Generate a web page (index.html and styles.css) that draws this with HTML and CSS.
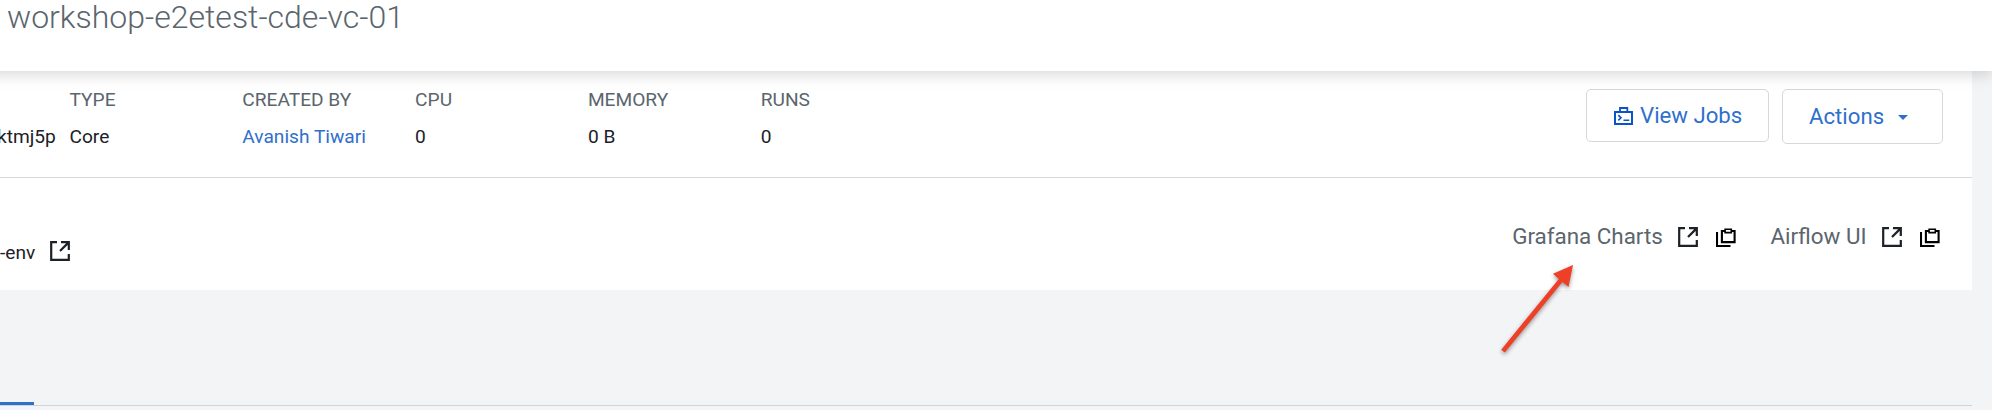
FILE: index.html
```
<!DOCTYPE html>
<html lang="en">
<head>
<meta charset="utf-8">
<title>Virtual cluster</title>
<link rel="stylesheet" href="styles.css">
</head>
<body>
<svg class="defs" width="0" height="0" aria-hidden="true">
  <symbol id="external" viewBox="0 0 20 20">
    <path d="M7 1.2H1.2V18.8H18.8V13M11 1.2H18.8V9M18.4 1.6L10 10" fill="none" stroke="currentColor" stroke-width="2.2"/>
  </symbol>
  <symbol id="clipboard" viewBox="0 0 20 20">
    <path d="M1 4V18H14.5M5.9 3H18.6V14.1H5.9Z" fill="none" stroke="currentColor" stroke-width="2.1"/>
    <path d="M9.1 1.3H15.3V4.6H9.1Z" fill="#fff" stroke="currentColor" stroke-width="1.6"/>
  </symbol>
</svg>
<header class="header"><h1 class="title">workshop-e2etest-cde-vc-01</h1></header>
<main class="card">
  <section class="summary">
    <dl class="facts">
      <div class="fact fact-id"><dt>&nbsp;</dt><dd>ktmj5p</dd></div>
      <div class="fact"><dt>TYPE</dt><dd>Core</dd></div>
      <div class="fact"><dt>CREATED BY</dt><dd><a class="link">Avanish Tiwari</a></dd></div>
      <div class="fact"><dt>CPU</dt><dd>0</dd></div>
      <div class="fact"><dt>MEMORY</dt><dd>0 B</dd></div>
      <div class="fact"><dt>RUNS</dt><dd>0</dd></div>
    </dl>
    <div class="buttons">
      <button class="btn btn-jobs">
        <svg class="jobs-icon" width="19" height="18" viewBox="0 0 19 18" fill="none" stroke="currentColor">
          <path d="M1 5H18V17H1Z" stroke-width="2"/>
          <path d="M6 5V1H13.3V5" stroke-width="1.8"/>
          <path d="M4.3 8.2L7 10.8L4.3 13.4M9.5 13.2H15.3" stroke-width="1.6"/>
        </svg>
        <span>View Jobs</span>
      </button>
      <button class="btn btn-actions"><span>Actions</span><i class="caret"></i></button>
    </div>
  </section>
  <section class="details">
    <div class="env"><span>-env</span><svg class="icon"><use href="#external"/></svg></div>
    <nav class="links">
      <div class="tool"><a>Grafana Charts</a><svg class="icon"><use href="#external"/></svg><svg class="icon copy"><use href="#clipboard"/></svg></div>
      <div class="tool"><a>Airflow UI</a><svg class="icon"><use href="#external"/></svg><svg class="icon copy"><use href="#clipboard"/></svg></div>
    </nav>
  </section>
</main>
<div class="tabs"><div class="tab-active"></div></div>
<svg class="arrow" width="90" height="106" viewBox="0 0 90 106" fill="#ee4027">
  <path d="M80 5L75.5 27L69.4 21.9L11.8 92.6L8.2 89.7L65.8 18.9L60 13.8Z"/>
</svg>
</body>
</html>
```

FILE: styles.css
```
* { box-sizing: border-box; }
body {
  margin: 0;
  height: 410px;
  overflow: hidden;
  background: #f3f4f6;
  color: #1b2127;
  font: 19.15px/25px Roboto, sans-serif;
}
.defs { position: absolute; }
.header {
  position: relative;
  z-index: 1;
  height: 71px;
  margin-left: -20px;
  background: #fff;
  box-shadow: 0 3px 15px rgba(0, 0, 0, .17);
}
.title {
  margin: 0;
  padding-left: 27px;
  color: #5a656d;
  font-size: 32px;
  font-weight: 300;
  line-height: 35px;
}
.card { width: 1972px; height: 219px; background: #fff; }
.summary {
  display: flex;
  justify-content: space-between;
  height: 107px;
  padding: 18px 29px 0 0;
  border-bottom: 1px solid #d5d7d9;
}
.facts { display: flex; margin: -2px 0 0 -3px; }
.fact { width: 172.8px; white-space: nowrap; }
.fact-id { width: 72.5px; }
.fact dt { color: #5a656d; }
.fact dd { margin: 12px 0 0; }
.link { color: #2f70cb; }
.buttons { display: flex; align-items: flex-start; gap: 13px; }
.btn {
  display: flex;
  align-items: center;
  border: 1px solid #d5d7db;
  border-radius: 5px;
  background: #fff;
  color: #2f70cb;
  font: 22.2px/26px Roboto, sans-serif;
  padding: 0 0 0 27px;
}
.btn span { margin-top: -2px; }
.btn-jobs { width: 183px; height: 53px; gap: 7px; }
.btn-actions { width: 161px; height: 55px; padding-left: 26px; gap: 14px; }
.jobs-icon { color: #0a54ca; }
.caret {
  border: 5.5px solid transparent;
  border-top-color: currentColor;
  border-bottom: 0;
  margin-top: 2px;
}
.details {
  display: flex;
  justify-content: space-between;
  padding: 46px 32px 0 0;
}
.env { display: flex; gap: 15px; padding-top: 16px; }
.icon { width: 20px; height: 20px; flex: none; margin-top: 1px; }
.links { display: flex; gap: 34px; color: #5a656d; font-size: 22.4px; line-height: 24px; }
.tool { display: flex; align-items: flex-start; }
.tool .icon { margin: 3px 0 0 15px; color: #1b2127; }
.tool .copy { margin: 4px 0 0 18.5px; color: #000; }
.tabs {
  display: flex;
  align-items: flex-end;
  width: 1972px;
  height: 116px;
  border-bottom: 1px solid #d1d4d7;
}
.tab-active { width: 34px; height: 3px; background: #2f70cb; }
.arrow {
  position: absolute;
  left: 1493px;
  top: 260px;
  filter: drop-shadow(0 2px 2px rgba(0, 0, 0, .4));
}
```
